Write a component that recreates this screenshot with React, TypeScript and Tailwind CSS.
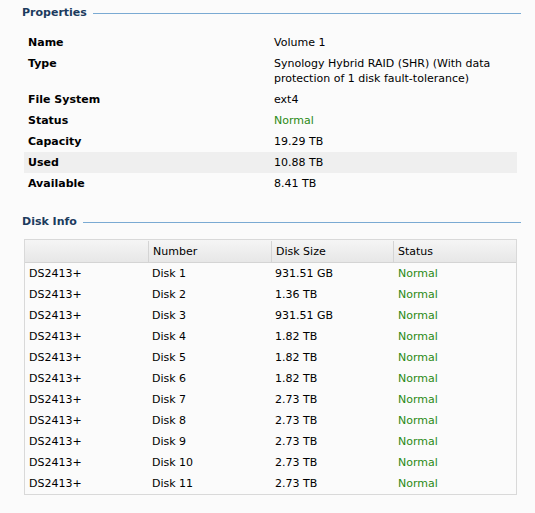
import React from "react";

const props: { label: string; value: React.ReactNode; shaded?: boolean; green?: boolean }[] = [
  { label: "Name", value: "Volume 1" },
  { label: "Type", value: "Synology Hybrid RAID (SHR) (With data protection of 1 disk fault-tolerance)" },
  { label: "File System", value: "ext4" },
  { label: "Status", value: "Normal", green: true },
  { label: "Capacity", value: "19.29 TB" },
  { label: "Used", value: "10.88 TB", shaded: true },
  { label: "Available", value: "8.41 TB" },
];

const disks: [string, string][] = [
  ["Disk 1", "931.51 GB"],
  ["Disk 2", "1.36 TB"],
  ["Disk 3", "931.51 GB"],
  ["Disk 4", "1.82 TB"],
  ["Disk 5", "1.82 TB"],
  ["Disk 6", "1.82 TB"],
  ["Disk 7", "2.73 TB"],
  ["Disk 8", "2.73 TB"],
  ["Disk 9", "2.73 TB"],
  ["Disk 10", "2.73 TB"],
  ["Disk 11", "2.73 TB"],
];

function SectionTitle({ title }: { title: string }) {
  return (
    <div className="flex items-center ml-[22px] mr-[14px] h-[16px]">
      <span className="font-bold text-[#1c3b5e] leading-[16px]">{title}</span>
      <div className="flex-1 ml-[6px] h-px bg-[#7aaad3]" />
    </div>
  );
}

export default function App() {
  return (
    <div
      className="w-[535px] h-[513px] bg-[#fbfbfb] text-[11px] text-black overflow-hidden"
      style={{ fontFamily: '"DejaVu Sans", Verdana, sans-serif' }}
    >
      <div className="pt-[5px]">
        <SectionTitle title="Properties" />
      </div>
      <div className="ml-[24px] mr-[18px] mt-[11px]">
        {props.map((p) => (
          <div
            key={p.label}
            className={`flex py-[3px] leading-[15px] ${p.shaded ? "bg-[#efefef]" : ""}`}
          >
            <div className="w-[250px] shrink-0 pl-[4px] font-bold">{p.label}</div>
            <div className={`w-[232px] ${p.green ? "text-[#2a8a14]" : ""}`}>{p.value}</div>
          </div>
        ))}
      </div>
      <div className="mt-[20px]">
        <SectionTitle title="Disk Info" />
      </div>
      <div className="ml-[24px] mr-[18px] mt-[9px] border border-[#d9d9d9]">
        <div className="flex h-[23px] bg-gradient-to-b from-[#f5f5f5] to-[#e7e7e7] border-b border-[#d4d4d4] pt-[1px] leading-[21px]">
          <div className="w-[124px] border-r border-[#d4d4d4]" />
          <div className="w-[123px] pl-[4px] border-r border-[#d4d4d4]">Number</div>
          <div className="w-[122px] pl-[4px] border-r border-[#d4d4d4]">Disk Size</div>
          <div className="flex-1 pl-[4px]">Status</div>
        </div>
        {disks.map(([n, s]) => (
          <div key={n} className="flex h-[21px] pt-[1px] leading-[20px]">
            <div className="w-[124px] pl-[4px]">DS2413+</div>
            <div className="w-[123px] pl-[3px]">{n}</div>
            <div className="w-[122px] pl-[3px]">{s}</div>
            <div className="flex-1 pl-[4px] text-[#2a8a14]">Normal</div>
          </div>
        ))}
      </div>
    </div>
  );
}
